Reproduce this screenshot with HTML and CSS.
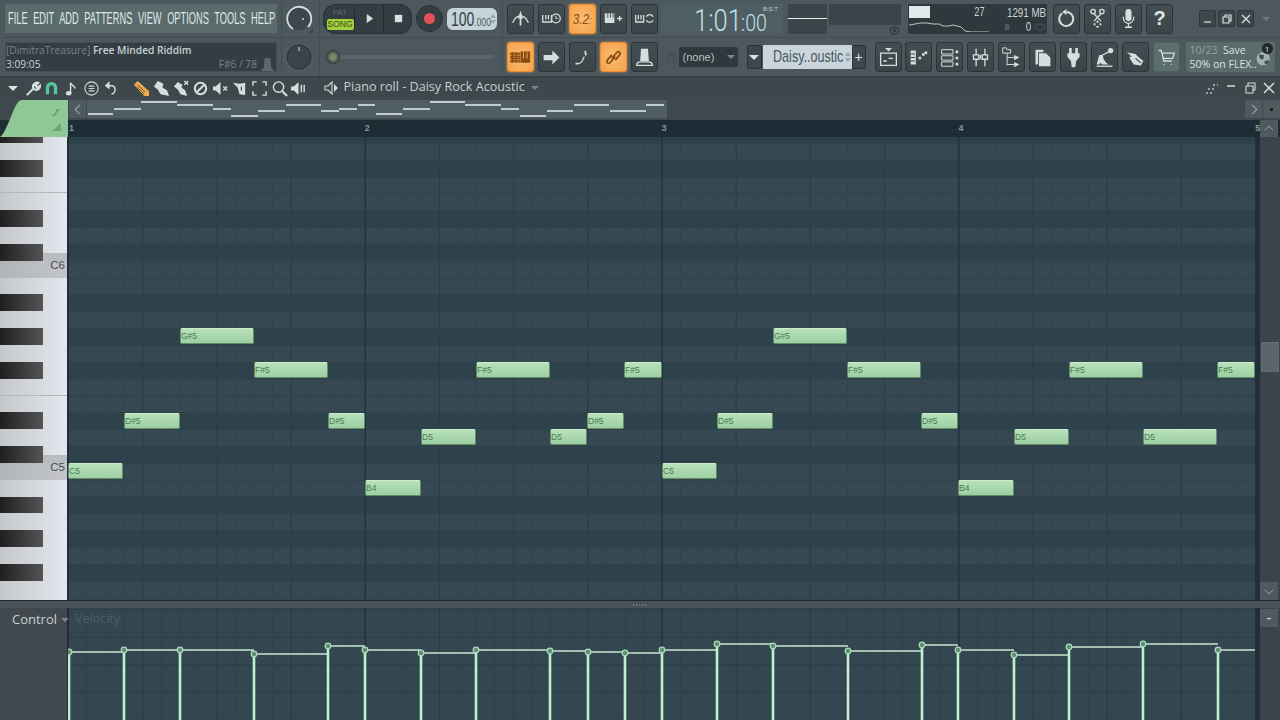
FILE: index.html
```html
<!DOCTYPE html>
<html lang="en">
<head>
<meta charset="utf-8">
<title>Piano roll - Daisy Rock Acoustic</title>
<link rel="stylesheet" href="styles.css">
</head>
<body>
<header class="toolbar">
  <section class="col c1">
    <div class="cell"><nav class="menu"><span class="menu-text">FILE EDIT ADD PATTERNS VIEW OPTIONS TOOLS HELP</span></nav></div>
    <div class="cell"><div class="hint">
      <div class="hint-line"><span class="dim">[DimitraTreasure]</span>&nbsp;<b>Free Minded Riddim</b></div>
      <div class="hint-line between"><span class="bright">3:09:05</span><span class="dim note-pos">F#6 / 78
        <svg class="hat" viewBox="0 0 14 16"><path d="M4 1h6l1 11H3zM0 15c1-3 3-3 4-3h6c1 0 3 0 4 3z"/></svg></span></div>
    </div></div>
  </section>
  <section class="col c2">
    <div class="cell center"><svg class="knob" viewBox="0 0 30 30"><circle cx="15" cy="15" r="11" class="k-fill"/><path d="M9 25A12 12 0 1 1 24 23" class="k-arc"/><circle cx="19" cy="15" r="1" class="k-dot"/><path d="M29 25l-4 4h4z" class="k-dim"/></svg></div>
    <div class="cell center"><svg class="knob" viewBox="0 0 30 30"><circle cx="15" cy="15" r="14" class="k-ring"/><circle cx="15" cy="15" r="12" class="k-fill2"/><path d="M15 5v4" class="k-tick"/></svg></div>
  </section>
  <section class="col c3">
    <div class="cell pad3">
      <div class="pill">
        <div class="mode"><span class="pat">PAT</span><span class="song">SONG</span></div>
        <div class="pill-btn"><svg viewBox="0 0 12 12"><path d="M3 1l7 5-7 5z"/></svg></div>
        <div class="pill-btn"><svg viewBox="0 0 12 12"><rect x="2" y="2" width="8" height="8"/></svg></div>
      </div>
      <div class="rec"><i></i></div>
      <div class="tempo"><span class="t-big">100</span><span class="t-small">.000</span><span class="spin"></span></div>
    </div>
    <div class="cell pad6"><span class="slider-knob"></span><span class="slider-track"></span></div>
  </section>
  <section class="col c4">
    <div class="cell pad4">
      <div class="btns">
        <button class="btn"><svg viewBox="0 0 24 24"><path class="s" d="M3 17c2-5 5-8 9-8s7 3 9 8"/><path class="w" d="M12 3l3 9h-6zM11 12h2v8h-2z"/></svg></button>
        <button class="btn"><svg viewBox="0 0 24 24"><path class="s" d="M2 8v8h10V8M5.500 8v5M8.500 8v5"/><circle class="s" cx="17" cy="12" r="5"/><path class="s thin" d="M17 9v3h2"/></svg></button>
        <button class="btn on"><span class="tick">3.2<small>:</small></span></button>
        <button class="btn"><svg viewBox="0 0 24 24"><path class="w" d="M2 6h3v5h1V6h2v5h1V6h2v5h1V6h1v11H2z"/><path class="s" d="M16 12h6M19 9v6"/></svg></button>
        <button class="btn"><svg viewBox="0 0 24 24"><path class="s" d="M2 8v8h9V8M5 8v5M8 8v5"/><path class="s" d="M14 10a4.500 4.500 0 0 1 8 0M22 14a4.500 4.500 0 0 1-8 0"/></svg></button>
      </div>
      <div class="time"><span class="t1">1:01</span><span class="t2">:00</span><span class="bst">B:S:T</span></div>
      <div class="osc"><i></i></div>
      <div class="osc2wrap"><div class="osc2"></div><svg class="eye" viewBox="0 0 12 10"><ellipse cx="6" cy="5" rx="5" ry="4"/><circle cx="6" cy="5" r="1.500"/></svg></div>
      <div class="cpu">
        <div class="cpu-l"><div class="cpu-top"><i></i><span>27</span></div>
          <svg class="graph" viewBox="0 0 80 14" preserveAspectRatio="none"><path d="M0 7l6-1 6-1 6 0 6 1 6 0 4 2 6 0 4-1 4 1 4 1 4 4 6 1h18"/></svg></div>
        <div class="cpu-r"><span>1291 MB</span><span class="zero"><em></em>0<svg viewBox="0 0 14 8"><ellipse cx="7" cy="4" rx="6" ry="3"/></svg></span></div>
      </div>
      <div class="btns ml7">
        <button class="btn"><svg viewBox="0 0 24 24"><path class="s wide" d="M7 6a8 8 0 1 0 5-1.500"/><path class="w" d="M12 1v7L7 4.500z"/></svg></button>
        <button class="btn"><svg viewBox="0 0 24 24"><circle class="s" cx="7" cy="4" r="2.500"/><circle class="s" cx="17" cy="4" r="2.500"/><path class="s" d="M8 6.500L16 15M16 6.500L8 15"/><path class="w" d="M12 14l2 2.500h-4zM12 23l2-2.500h-4zM7 18.500L9.500 16.500v4zM17 18.500L14.500 16.500v4z"/></svg></button>
        <button class="btn"><svg viewBox="0 0 24 24"><rect class="w" x="8.500" y="1" width="7" height="14" rx="3.500"/><path class="s" d="M6 10c0 10 12 10 12 0M12 17v4M8 22h8"/></svg></button>
        <button class="btn help">?</button>
      </div>
      <div class="win">
        <button class="wbtn"><svg viewBox="0 0 12 12"><path d="M2 9h7"/></svg></button>
        <button class="wbtn"><svg viewBox="0 0 12 12"><path d="M2 4h6v6H2zM4 4V2h6v6H8"/></svg></button>
        <button class="wbtn"><svg viewBox="0 0 12 12"><path d="M2 2l8 8M10 2l-8 8"/></svg></button>
      </div>
      <span class="tri tri-far"></span>
    </div>
    <div class="cell pad4">
      <div class="btns">
        <button class="btn on"><svg viewBox="0 0 24 24"><path class="o" d="M1 7h10v2H1zM1 11h10v2H1zM1 15h10v2H1zM3 6v12M7 6v12"/><path class="of" d="M12 5h11v13H12zM15 6v7h1V6zM19 6v7h1V6z"/></svg></button>
        <button class="btn"><svg viewBox="0 0 24 24"><path class="w" d="M3 9h10V4l8 8-8 8v-5H3z"/></svg></button>
        <button class="btn"><svg viewBox="0 0 24 24"><path class="s" d="M6 19c5 0 6-3 8-8"/><path class="w" d="M14 5l2-1 1 5-2 1zM4 18h3v2H4z"/></svg></button>
        <button class="btn on"><svg viewBox="0 0 24 24"><path class="o wide" d="M10 13l6-7c2-2 5 1 3 3l-5 6M14 11l-6 7c-2 2-5-1-3-3l5-6"/></svg></button>
        <button class="btn"><svg viewBox="0 0 24 24"><path class="w" d="M8 2h8l1 14H7z"/><path class="s" d="M3 21c0-3 3-4 5-4h8c2 0 5 1 5 4z"/></svg></button>
      </div>
      <svg class="magnet" viewBox="0 0 16 16"><path d="M3 14V8a5 5 0 0 1 10 0v6h-3V8a2 2 0 0 0-4 0v6z"/></svg>
      <div class="select">(none)<span class="tri"></span></div>
      <button class="arrowbtn"><span class="tri light"></span></button>
      <div class="channel"><span class="ch-text">Daisy..oustic</span><span class="spin"></span></div>
      <button class="plus">+</button>
      <div class="btns ml9">
        <button class="btn"><svg viewBox="0 0 24 24"><path class="w" d="M8 1h8l-4 4z"/><path class="s" d="M3 7h18v14H3zM6 16h4M12 13h5"/></svg></button>
        <button class="btn"><svg viewBox="0 0 24 24"><path class="w" d="M3 4h6v16H3z"/><path class="d" d="M3 8h5M3 12h5M3 16h5"/><path class="w" d="M12 11h3v3h-3zM16 7h3v3h-3zM19 5h3v3h-3z"/></svg></button>
        <button class="btn"><svg viewBox="0 0 24 24"><path class="s thin" d="M3 3h13v5H3zM3 10h13v5H3zM3 17h13v5H3z"/><path class="w" d="M19 4h3v3h-3zM19 11h3v3h-3zM19 18h3v3h-3z"/></svg></button>
        <button class="btn"><svg viewBox="0 0 24 24"><path class="s" d="M7 2v7M7 14v8M17 2v7M17 14v8"/><path class="s" d="M4 9h6v5H4zM14 9h6v5h-6zM12 9v5"/></svg></button>
        <button class="btn"><svg viewBox="0 0 24 24"><path class="s thin" d="M2 1h4l1 2h4v4H2zM7 7v14M7 12h8M7 20h8"/><path class="w" d="M15 9l6 3-6 3zM15 17l6 3-6 3z"/></svg></button>
        <button class="btn"><svg viewBox="0 0 24 24"><path class="w" d="M4 3h9v3H7v14H4zM8 7h8l5 5v10H8z"/></svg></button>
        <button class="btn"><svg viewBox="0 0 24 24"><path class="w" d="M7 1h3v6H7zM14 1h3v6h-3zM5 7h14v4l-4 5-1 7h-4l-1-7-4-5z"/></svg></button>
        <button class="btn"><svg viewBox="0 0 24 24"><circle class="w" cx="19" cy="4" r="3"/><path class="s" d="M18 5L8 10"/><path class="w" d="M6 9h4l1 5 3 4 3 2H9l-2-2-1 2H3z"/><path class="s" d="M3 22h18"/></svg></button>
        <button class="btn"><svg viewBox="0 0 24 24"><path class="w" d="M2 6l10 2 3 3 6 5-3 5-8-1-4-6-1-3h3z"/><path class="d" d="M12 13l6 5"/></svg></button>
        <button class="btn cart"><svg viewBox="0 0 24 24"><path class="s" d="M3 4h3l3 12h9M7 7h14l-2 6H9M9 20h1M17 20h1"/></svg></button>
      </div>
      <div class="news">
        <div><span class="dim2">10/23</span>&nbsp; Save<br>50% on FLEX..</div>
        <svg class="globe" viewBox="0 0 24 28"><circle cx="11" cy="16" r="8"/><path d="M6 11l6 1-1 5-4-1zM12 20l5-3 1 4-4 2z"/></svg>
        <span class="badge">1</span>
      </div>
    </div>
  </section>
</header>

<main class="roll">
  <div class="titlebar">
    <span class="ti"><span class="tri light"></span></span>
    <span class="ti"><svg viewBox="0 0 18 18"><path class="s wide" d="M3 16l7-7M10 9c-2-4 2-7 5-6l-3 3 2 2 3-2c0 4-4 6-7 3"/></svg></span>
    <span class="ti"><svg viewBox="0 0 18 18"><path class="g" d="M3 15V8a6 6 0 0 1 12 0v7h-3.500V8a2.500 2.500 0 0 0-5 0v7z"/></svg></span>
    <span class="ti"><svg viewBox="0 0 18 18"><path class="s" d="M8 14V3c1 3 4 3 5 6"/><ellipse class="w" cx="6" cy="14" rx="3" ry="2.300"/></svg></span>
    <span class="ti"><svg viewBox="0 0 18 18"><circle class="s thin" cx="9" cy="9" r="7"/><path class="s thin" d="M6 6.500h6M6 9h6M6 11.500h6"/></svg></span>
    <span class="ti"><svg viewBox="0 0 18 18"><path class="s" d="M7 6h3c5 0 5 8 0 9"/><path class="w" d="M8 1v9L3 6z"/></svg></span>
    <span class="ti gapl"><svg viewBox="0 0 18 18"><path class="pencil" d="M1 5l4-4 12 11v5h-5z"/><path class="pen-d" d="M5 5l8 8M4 7l8 8"/></svg></span>
    <span class="ti"><svg viewBox="0 0 18 18"><path class="w" d="M5 1l6 3-1 4 5 3 2 6-9-2-3-5-4-3z"/></svg></span>
    <span class="ti"><svg viewBox="0 0 18 18"><path class="w" d="M5 2l5 3-1 3 4 3 2 6-7-2-3-5-4-3z"/><path class="s" d="M12 1l4 4M16 1l-4 4"/></svg></span>
    <span class="ti"><svg viewBox="0 0 18 18"><circle class="s wide" cx="9" cy="9" r="6"/><path class="s wide" d="M5 13l8-8"/></svg></span>
    <span class="ti"><svg viewBox="0 0 18 18"><path class="w" d="M1 7h3l5-5v14l-5-5H1z"/><path class="s" d="M12 7l4 4M16 7l-4 4"/></svg></span>
    <span class="ti"><svg viewBox="0 0 18 18"><path class="w" d="M2 3l7 1 6-1v13l-6-1-2-7z"/><path class="d" d="M11 7v4"/></svg></span>
    <span class="ti"><svg viewBox="0 0 18 18"><path class="s" d="M2 6V2h4M12 2h4v4M16 12v4h-4M6 16H2v-4"/></svg></span>
    <span class="ti"><svg viewBox="0 0 18 18"><circle class="s" cx="8" cy="7.500" r="5.500"/><path class="s wide" d="M12 12l5 5"/></svg></span>
    <span class="ti"><svg viewBox="0 0 18 18"><path class="w" d="M1 7h3l5-5v14l-5-5H1z"/><path class="s" d="M12 5v8M15 5v8"/></svg></span>
    <span class="ti speaker"><svg viewBox="0 0 16 16"><path class="s thin" d="M2 6h3l4-4v12l-4-4H2z"/><path class="w" d="M11 4l4 4-4 4z"/></svg></span>
    <span class="roll-title">Piano roll - Daisy Rock Acoustic</span>
    <span class="tri title-tri"></span>
    <span class="t-right">
      <svg class="tr" viewBox="0 0 14 14"><path class="dots" d="M1 12h2M5 12h2M3 8h2M7 8h2M8 4h2M12 4h1"/></svg>
      <svg class="tr" viewBox="0 0 14 14"><path class="s" d="M3 5h8"/></svg>
      <svg class="tr" viewBox="0 0 14 14"><path class="s thin" d="M3 5h7v7H3zM5 5V2h7v7h-2"/></svg>
      <svg class="tr" viewBox="0 0 14 14"><path class="s" d="M2 2l10 10M12 2L2 12"/></svg>
    </span>
  </div>

  <div class="head">
    <div class="corner">
      <svg viewBox="0 0 68 38"><path class="corner-bg" d="M22 1H68V38H0C3 36 6 30 12 15 16 6 18 1 22 1z"/><path class="corner-i" d="M52 16h3l2-5h3" /><path class="corner-t" d="M52 32l9-8v8z"/></svg>
    </div>
    <div class="head-r">
      <div class="overview">
        <button class="nav"><svg viewBox="0 0 10 12"><path d="M7 1L2 6l5 5"/></svg></button>
        <svg class="ov-notes" viewBox="87 100 580 18" preserveAspectRatio="none"><path d="M88 114H113M114 109H141M141 102H177M177 105H213M213 109H231M231 116H258M258 111H285M286 105H321M321 111H339M339 109H357M358 105H375M376 114H402M403 109H430M430 102H465M465 105H501M501 109H519M520 116H546M547 111H573M574 105H609M610 111H646M646 105H664"/></svg>
        <span class="ov-fill"></span>
        <button class="nav"><svg viewBox="0 0 10 12"><path d="M3 1l5 5-5 5"/></svg></button>
        <button class="nav"><i class="dot"></i></button>
      </div>
      <div class="ruler">
        <div class="bars"><span>1</span><span>2</span><span>3</span><span>4</span><span class="last">5</span></div>
        <button class="nav up"><svg viewBox="0 0 12 10"><path d="M1 7l5-5 5 5"/></svg></button>
      </div>
    </div>
  </div>

  <div class="main">
    <div class="keys">
      <div class="k b"><i></i></div><div class="k"></div><div class="k b"><i></i></div><div class="k line"></div><div class="k"></div><div class="k b"><i></i></div><div class="k"></div><div class="k b cs"><i></i></div><div class="k c"><span>C6</span></div>
      <div class="k"></div><div class="k b"><i></i></div><div class="k"></div><div class="k b"><i></i></div><div class="k"></div><div class="k b"><i></i></div><div class="k line"></div><div class="k"></div><div class="k b"><i></i></div><div class="k"></div><div class="k b cs"><i></i></div><div class="k c"><span>C5</span></div>
      <div class="k"></div><div class="k b"><i></i></div><div class="k"></div><div class="k b"><i></i></div><div class="k"></div><div class="k b"><i></i></div><div class="k"></div><div class="k"></div>
    </div>
    <div class="grid">
      <div class="note r-c5" style="left:0;width:55px">C5</div>
      <div class="note r-ds5" style="left:56px;width:56px">D#5</div>
      <div class="note r-gs5" style="left:112px;width:74px">G#5</div>
      <div class="note r-fs5" style="left:186px;width:74px">F#5</div>
      <div class="note r-ds5" style="left:260px;width:37px">D#5</div>
      <div class="note r-b4" style="left:297px;width:56px">B4</div>
      <div class="note r-d5" style="left:353px;width:55px">D5</div>
      <div class="note r-fs5" style="left:408px;width:74px">F#5</div>
      <div class="note r-d5" style="left:482px;width:37px">D5</div>
      <div class="note r-ds5" style="left:519px;width:37px">D#5</div>
      <div class="note r-fs5" style="left:556px;width:38px">F#5</div>
      <div class="note r-c5" style="left:594px;width:55px">C5</div>
      <div class="note r-ds5" style="left:649px;width:56px">D#5</div>
      <div class="note r-gs5" style="left:705px;width:74px">G#5</div>
      <div class="note r-fs5" style="left:779px;width:74px">F#5</div>
      <div class="note r-ds5" style="left:853px;width:37px">D#5</div>
      <div class="note r-b4" style="left:890px;width:56px">B4</div>
      <div class="note r-d5" style="left:946px;width:55px">D5</div>
      <div class="note r-fs5" style="left:1001px;width:74px">F#5</div>
      <div class="note r-d5" style="left:1075px;width:74px">D5</div>
      <div class="note r-fs5" style="left:1149px;width:38px">F#5</div>
    </div>
    <div class="scroll">
      <span class="thumb"></span>
      <button class="nav sb-down"><svg viewBox="0 0 12 10"><path d="M1 3l5 5 5-5"/></svg></button>
    </div>
  </div>

  <div class="split"><i></i></div>

  <div class="control">
    <div class="ctl-label"><span>Control</span><span class="tri"></span></div>
    <div class="ctl-grid">
      <span class="velocity">Velocity</span>
      <svg class="vel" viewBox="68 608 1188 112">
        <path class="v-h" d="M69 652H124M124 650H180M180 650H254M254 654H328M328 646H365M365 650H421M421 653H476M476 650H550M550 651H588M588 652H625M625 653H662M662 650H717M717 644H773M773 646H848M848 651H922M922 645H958M958 650H1014M1014 655H1069M1069 647H1143M1143 644H1218M1218 650H1255"/>
        <path class="v-s" d="M69 652V720M124 650V720M180 650V720M254 654V720M328 646V720M365 650V720M421 653V720M476 650V720M550 651V720M588 652V720M625 653V720M662 650V720M717 644V720M773 646V720M848 651V720M922 645V720M958 650V720M1014 655V720M1069 647V720M1143 644V720M1218 650V720"/>
        <g class="v-c"><circle cx="69" cy="652" r="2.800"/><circle cx="124" cy="650" r="2.800"/><circle cx="180" cy="650" r="2.800"/><circle cx="254" cy="654" r="2.800"/><circle cx="328" cy="646" r="2.800"/><circle cx="365" cy="650" r="2.800"/><circle cx="421" cy="653" r="2.800"/><circle cx="476" cy="650" r="2.800"/><circle cx="550" cy="651" r="2.800"/><circle cx="588" cy="652" r="2.800"/><circle cx="625" cy="653" r="2.800"/><circle cx="662" cy="650" r="2.800"/><circle cx="717" cy="644" r="2.800"/><circle cx="773" cy="646" r="2.800"/><circle cx="848" cy="651" r="2.800"/><circle cx="922" cy="645" r="2.800"/><circle cx="958" cy="650" r="2.800"/><circle cx="1014" cy="655" r="2.800"/><circle cx="1069" cy="647" r="2.800"/><circle cx="1143" cy="644" r="2.800"/><circle cx="1218" cy="650" r="2.800"/></g>
      </svg>
    </div>
    <div class="scroll"><button class="nav sb-minus">-</button></div>
  </div>
</main>
</body>
</html>
```
FILE: styles.css
```css
* { box-sizing: border-box; }
html, body { margin: 0; height: 100%; }
body { width: 1280px; height: 720px; overflow: hidden; background: #40494e; font-family: "Liberation Sans", Arial, sans-serif; color: #d8e0e2; }
button { border: 0; padding: 0; margin: 0; font: inherit; color: inherit; }
svg { display: block; }

/* shared icon paints */
.s { fill: none; stroke: #d5dddd; stroke-width: 1.5; }
.s.thin { stroke-width: 1.1; }
.s.wide { stroke-width: 2.2; }
.w { fill: #d5dddd; stroke: none; }
.d { fill: none; stroke: #3a4449; stroke-width: 1.2; }
.o { fill: none; stroke: #8a4b10; stroke-width: 1.4; }
.o.wide { stroke-width: 2; }
.of { fill: #8a4b10; fill-rule: evenodd; }
.g { fill: #58c79a; }

.tri { display: inline-block; width: 0; height: 0; border-left: 4px solid transparent; border-right: 4px solid transparent; border-top: 4px solid #7a868b; }
.tri.light { border-top-color: #dbe3e5; border-left-width: 5px; border-right-width: 5px; border-top-width: 5px; }

/* ------- toolbar ------- */
.toolbar { height: 78px; display: flex; background: #4c585e; border-bottom: 2px solid #363f44; }
.col { display: flex; flex-direction: column; flex: none; border-right: 1px solid #424c51; }
.c1 { width: 282px; }
.c2 { width: 38px; }
.c3 { width: 183px; }
.c4 { width: 777px; border-right: 0; }
.cell { height: 38px; display: flex; align-items: center; border-bottom: 1px solid #424c51; }
.cell + .cell { border-bottom: 0; }
.center { justify-content: center; padding-right: 4px; }
.pad3 { padding-left: 3px; }
.pad4 { padding-left: 4px; }
.pad6 { padding-left: 6px; }

.c1 .cell { padding-left: 5px; }
.menu { width: 272px; height: 29px; background: #5a6b6c; border-radius: 1px; overflow: hidden; display: flex; align-items: center; padding-left: 3px; }
.menu-text { font-size: 17px; white-space: nowrap; color: #dfe9e8; transform: scaleX(.545); transform-origin: left center; word-spacing: 5.500px; }
.hint { width: 272px; height: 30px; background: #333d43; border: 1px solid #454f54; padding: 0 2px 0 0; font-size: 10.200px; font-family: "Open Sans", sans-serif; }
.hint-line { height: 14px; line-height: 14px; white-space: nowrap; }
.hint-line b { font-weight: 600; color: #c8d2d4; }
.between { display: flex; justify-content: space-between; }
.dim { color: #76838a; }
.bright { color: #c8d2d4; }
.note-pos { display: flex; align-items: center; gap: 4px; }
.hat { width: 13px; height: 15px; }
.hat path { fill: #5d686e; }

.knob { width: 30px; height: 30px; }
.k-fill { fill: #3c464b; }
.k-fill2 { fill: #3a4449; stroke: #2a3236; }
.k-ring { fill: none; stroke: #6a767b; stroke-dasharray: 1 3; }
.k-arc { fill: none; stroke: #d5dee0; stroke-width: 1.800; }
.k-tick { fill: none; stroke: #c5ced0; stroke-width: 1.200; }
.k-dot { fill: #cdd6d8; }
.k-dim { fill: #39434a; }

.pill { width: 89px; height: 30px; display: flex; background: #343d42; border-radius: 13px; overflow: hidden; box-shadow: inset 0 0 0 1px #2a3136; }
.mode { width: 32px; display: flex; flex-direction: column; align-items: center; padding: 3px 0 3px 3px; border-right: 1px solid #252c30; }
.pat { font-size: 8px; line-height: 12px; color: #5e6a70; }
.song { width: 27px; height: 11px; line-height: 11px; background: #a3d13c; border-radius: 2px; font-size: 8.500px; text-align: center; color: #39491a; }
.pill-btn { flex: 1; display: flex; align-items: center; justify-content: center; border-right: 1px solid #252c30; }
.pill-btn:last-child { border-right: 0; }
.pill-btn svg { width: 11px; height: 11px; }
.pill-btn path, .pill-btn rect { fill: #d6dfe1; }
.rec { width: 27px; height: 27px; margin-left: 4px; border-radius: 50%; background: #343d42; display: flex; align-items: center; justify-content: center; border: 1px solid #2a3136; }
.rec i { width: 11px; height: 11px; border-radius: 50%; background: #e4505a; }
.tempo { width: 50px; height: 22px; margin-left: 4px; background: #c6d3d8; border-radius: 6px; color: #33434b; display: flex; align-items: baseline; padding-left: 4px; position: relative; line-height: 22px; }
.t-big { font-size: 20px; transform: scaleX(.7); transform-origin: left; width: 23px; }
.t-small { font-size: 11px; transform: scaleX(.8); transform-origin: left; color: #4c5e66; }
.spin { position: absolute; right: 1px; top: 6px; width: 6px; height: 10px; display: flex; flex-direction: column; justify-content: space-between; }
.spin::before, .spin::after { content: ""; width: 0; height: 0; border-left: 3px solid transparent; border-right: 3px solid transparent; }
.spin::before { border-bottom: 4px solid #98a7ad; }
.spin::after { border-top: 4px solid #98a7ad; }
.slider-knob { width: 14px; height: 14px; border-radius: 50%; background: radial-gradient(#7e8a6a 25%, #2e373b 70%); }
.slider-track { width: 153px; height: 4px; background: #59656a; }

.btns { display: flex; gap: 3.900px; }
.ml7 { margin-left: 6.400px; }
.ml9 { margin-left: 9px; }
.btn { width: 27px; height: 30px; background: linear-gradient(#434d52, #3b4449); border: 1px solid #2d3438; border-radius: 3px; display: flex; align-items: center; justify-content: center; }
.btn svg { width: 21px; height: 21px; }
.btn.on { background: radial-gradient(#f9bd73, #f5a14b); border-color: #f18c2b; box-shadow: 0 0 2px #f7a552; }
.btn.cart { background: #5b6f6f; border-color: #4d5e5e; }
.tick { font-size: 14px; font-style: italic; color: #8b4b12; transform: scaleX(.85); }
.tick small { font-size: 10px; }
.help { font-size: 20px; font-weight: bold; color: #e0e7e7; }

.time { width: 122px; height: 30px; margin-left: 3.400px; background: #4f5e63; position: relative; color: #bde0e8; font-family: Roboto, sans-serif; font-weight: 300; display: flex; align-items: baseline; padding-left: 33px; line-height: 32px; border-radius: 2px; }
.t1 { font-size: 32px; width: 47px; transform: scaleX(.8); transform-origin: left; white-space: nowrap; }
.t2 { font-size: 24px; width: 26px; transform: scaleX(.82); transform-origin: left; }
.bst { position: absolute; right: 5px; top: 2px; font-size: 6px; line-height: 7px; color: #c5d0d2; font-family: "Liberation Sans", sans-serif; font-weight: 400; }
.osc { width: 39px; height: 30px; margin-left: 5px; background: #3a4449; display: flex; align-items: center; border-radius: 1px; }
.osc i { width: 100%; height: 1px; background: #e8eeee; }
.osc2wrap { width: 72px; margin-left: 2px; height: 30px; }
.osc2 { height: 21px; background: #3a4449; border-radius: 1px; }
.eye { width: 11px; height: 9px; margin: 1px 0 0 60px; }
.eye ellipse, .eye circle { fill: none; stroke: #2f383d; stroke-width: 1.2; }
.cpu { width: 139px; height: 30px; margin-left: 7px; background: #2f383d; display: flex; border-radius: 1px; }
.cpu-l { width: 82px; padding: 2px 0 0 1px; }
.cpu-top { height: 12px; display: flex; justify-content: space-between; color: #ccd6d8; font-size: 13px; line-height: 12px; padding-right: 5px; }
.cpu-top i { width: 21px; height: 12px; background: #e1e9ec; }
.cpu-top span { transform: scaleX(.7); transform-origin: right; }
.graph { width: 80px; height: 14px; }
.graph path { fill: none; stroke: #b8c4c6; stroke-width: 1; }
.cpu-r { flex: 1; display: flex; flex-direction: column; align-items: flex-end; padding: 2px 1px 0 0; font-size: 13px; color: #ccd6d8; }
.cpu-r > span { line-height: 14px; white-space: nowrap; transform: scaleX(.75); transform-origin: right; }
.zero { display: flex; align-items: center; gap: 4px; }
.zero em { width: 6px; height: 6px; background: #50595e; margin-right: 18px; }
.zero svg { width: 16px; height: 8px; }
.zero ellipse { fill: none; stroke: #4e595f; }
.win { display: flex; gap: 2px; margin-left: 26px; }
.wbtn { width: 17px; height: 17px; background: #3c464b; border: 1px solid #2f373b; border-radius: 2px; display: flex; align-items: center; justify-content: center; }
.wbtn svg { width: 12px; height: 12px; }
.wbtn path { fill: none; stroke: #dbe3e5; stroke-width: 1.2; }
.tri-far { margin-left: 8px; border-top-color: #6f7b80; }

.magnet { width: 14px; height: 14px; margin-left: 6px; }
.magnet path { fill: #454f54; }
.select { width: 59px; height: 20px; margin-left: 1px; background: #2f383d; border-radius: 2px; font-size: 11px; line-height: 20px; padding-left: 4px; color: #b6c1c4; display: flex; align-items: center; justify-content: space-between; padding-right: 3px; }
.arrowbtn { width: 15px; height: 24px; margin-left: 9px; background: #3c464b; border: 1px solid #2d3438; border-radius: 2px; display: flex; align-items: center; justify-content: center; }
.channel { width: 89px; height: 24px; margin-left: 1px; background: #c9d5da; position: relative; padding-left: 10px; border-radius: 1px; }
.ch-text { display: inline-block; width: 72px; font-size: 17px; line-height: 24px; color: #46565e; white-space: nowrap; transform: scaleX(.74); transform-origin: left; }
.channel .spin { top: 7px; }
.plus { width: 14px; height: 24px; background: #3c464b; border: 1px solid #2d3438; border-radius: 2px; color: #dbe3e5; font-size: 14px; line-height: 20px; }
.news { width: 89px; height: 30px; margin-left: 6px; background: #5a6b6a; border-radius: 2px; font-size: 10.500px; line-height: 14px; padding: 1px 0 0 4px; position: relative; color: #d9e2e2; font-family: "Open Sans", sans-serif; white-space: nowrap; }
.dim2 { color: #93a3a4; }
.globe { position: absolute; right: 1px; top: 1px; width: 20px; height: 28px; }
.globe circle { fill: #9fb0b2; }
.globe path { fill: #414b50; }
.badge { position: absolute; right: 2px; top: 1px; width: 11px; height: 11px; border-radius: 50%; background: #20282c; color: #e4eaea; font-size: 8px; line-height: 11px; text-align: center; }

/* ------- piano roll ------- */
.titlebar { height: 21px; background: #3d474c; display: flex; align-items: center; padding: 0 0 1px 3px; }
.ti { width: 19.600px; height: 18px; display: flex; align-items: center; justify-content: center; flex: none; }
.ti svg { width: 17px; height: 17px; }
.gapl { margin-left: 11.600px; }
.pencil { fill: #f0ad52; }
.pen-d { stroke: #6b4a20; fill: none; }
.speaker { margin-left: 14px; width: 16px; }
.speaker svg { width: 16px; height: 16px; }
.roll-title { margin-left: 5px; font-family: "Open Sans", sans-serif; font-size: 12.600px; line-height: 16px; margin-top: -2px; color: #c5cfd2; white-space: nowrap; }
.title-tri { margin-left: 6px; }
.t-right { margin-left: auto; display: flex; gap: 5px; padding-right: 4px; }
.tr { width: 14px; height: 14px; }
.dots { fill: none; stroke: #b7c1c4; stroke-width: 1.500; }

.head { height: 38px; display: flex; }
.corner { width: 68px; flex: none; background: linear-gradient(#3e484d 0 21px, #1e2d36 21px); }
.corner svg { width: 68px; height: 38px; }
.corner-bg { fill: #8fc796; }
.corner-i { fill: none; stroke: #5e8f66; stroke-width: 1.200; }
.corner-t { fill: #6fa277; }
.head-r { flex: 1; display: flex; flex-direction: column; }
.overview { height: 21px; padding: 1px 0 2px 1px; display: flex; gap: 1px; background: #3e484d; }
.nav { width: 17px; flex: none; background: #4f595e; display: flex; align-items: center; justify-content: center; color: #c7d0d2; }
.nav svg { width: 10px; height: 11px; }
.nav path { fill: none; stroke: #98a3a8; stroke-width: 1.200; }
.dot { width: 3px; height: 3px; background: #1c2226; }
.ov-notes { width: 580px; height: 18px; background: #4f5e65; }
.ov-notes path { fill: none; stroke: #e8f0ee; stroke-width: 1.500; }
.ov-fill { flex: 1; }
.ruler { height: 17px; display: flex; background: #1d2c35; }
.bars { flex: none; width: 1192px; display: flex; }
.bars span { width: 296.800px; flex: none; font-size: 9px; line-height: 16px; color: #8a989e; font-weight: bold; }
.bars span:first-child { padding-left: 1px; }
.bars span.last { width: 4.800px; }
.nav.up { margin-left: auto; width: 18px; margin-right: 2px; }
.main { height: 463px; display: flex; background: #1f2e37; overflow: hidden; }
.keys { width: 67px; flex: none; overflow: hidden; background: linear-gradient(90deg, #c4c7ca, #e4e7ee); }
.k { height: 16.850px; position: relative; flex: none; }
.k:first-child { margin-top: -11px; }
.k.b i { display: block; width: 43px; height: 100%; background: linear-gradient(90deg, #1f1f1f, #555); }
.k.line { border-bottom: 1px solid #b4b8bd; }
.k.cs { background: linear-gradient(transparent 50%, #b9bcc0 50%); }
.k.c { background: linear-gradient(90deg, #b0b3b8, #c4c6cb); }
.k.c span { position: absolute; right: 2px; top: -3px; font-size: 11.500px; line-height: 14px; color: #444c52; }
.grid { width: 1188px; margin-left: 1px; flex: none; position: relative;
  background-color: #364953;
  background-image:
    linear-gradient(90deg, #1e2d36 1px, transparent 1px),
    linear-gradient(90deg, #2a3c46 1px, transparent 1px),
    linear-gradient(90deg, #30434e 1px, transparent 1px),
    linear-gradient(#2e414b 1px, transparent 1px),
    linear-gradient(#2e424c 8.333%, transparent 8.333% 16.666%, #2e424c 16.666% 25%, transparent 25% 41.666%, #2e424c 41.666% 50%, transparent 50% 58.333%, #2e424c 58.333% 66.666%, transparent 66.666% 83.333%, #2e424c 83.333% 91.666%, transparent 91.666%);
  background-size: 296.800px 100%, 74.200px 100%, 18.550px 100%, 100% 16.850px, 100% 202.200px;
  background-position: 0 0, 0 0, 0 0, 0 -11px, 0 -11px;
}
.note { position: absolute; height: 16px; background: linear-gradient(#b8e1b9, #9dcfa3); border: 1px solid #5f8f69; border-top-color: #cdeccd; border-radius: 2px; font-size: 8.500px; line-height: 14px; padding-left: 0; color: #477d53; overflow: hidden; }
.r-gs5 { top: 191.200px; }
.r-fs5 { top: 224.900px; }
.r-ds5 { top: 275.500px; }
.r-d5 { top: 292.300px; }
.r-c5 { top: 326px; }
.r-b4 { top: 342.900px; }
.scroll { width: 20px; margin-left: 4px; flex: none; background: #3c4449; position: relative; }
.thumb { position: absolute; left: 1px; top: 205px; width: 18px; height: 30px; background: #5b666c; border: 1px solid #646f75; }
.nav.sb-down { position: absolute; left: 0; bottom: 0; width: 18px; height: 18px; }
.nav.sb-minus { width: 18px; height: 18px; margin-top: 1px; }
.split { height: 8px; background: #4a5257; border-top: 1px solid #20292f; display: flex; justify-content: center; align-items: center; }
.split i { width: 16px; height: 2px; background: radial-gradient(circle, #75808a 1px, transparent 1px) 0 0 / 3px 2px; }
.control { height: 112px; display: flex; background: #1f2e37; }
.ctl-label { width: 67px; flex: none; background: #41494e; font-size: 13px; padding: 3px 0 0 12px; display: flex; gap: 4px; color: #c6cfd2; line-height: 16px; font-family: "Open Sans", sans-serif; height: 100%; align-items: flex-start; }
.ctl-label .tri { margin-top: 7px; }
.ctl-grid { width: 1188px; margin-left: 1px; flex: none; position: relative; overflow: hidden;
  background-color: #344751;
  background-image:
    linear-gradient(90deg, #1e2d36 1px, transparent 1px),
    linear-gradient(90deg, #2a3c46 1px, transparent 1px),
    linear-gradient(90deg, #2d404b 1px, transparent 1px),
    linear-gradient(#2a3c46 1px, transparent 1px);
  background-size: 296.800px 100%, 74.200px 100%, 18.550px 100%, 100% 27.700px;
  background-position: 0 0, 0 0, 0 0, 0 1px;
}
.velocity { position: absolute; left: 7px; top: 3px; font-size: 12.500px; line-height: 16px; color: #4a5d68; font-family: "Open Sans", sans-serif; }
.vel { position: absolute; left: 0; top: 0; width: 1188px; height: 112px; }
.v-h { fill: none; stroke: #c6e6d0; stroke-width: 1.500; }
.v-s { fill: none; stroke: #bff0cf; stroke-width: 2.600; }
.v-c circle { fill: #5f8f72; stroke: #a9dcbb; stroke-width: 1.200; }
```
